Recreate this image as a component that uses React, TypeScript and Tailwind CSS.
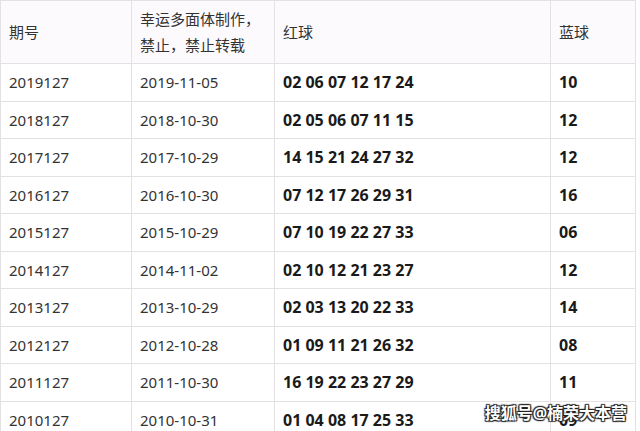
const rows: [string, string, string, string][] = [
  ['2019127', '2019-11-05', '02 06 07 12 17 24', '10'],
  ['2018127', '2018-10-30', '02 05 06 07 11 15', '12'],
  ['2017127', '2017-10-29', '14 15 21 24 27 32', '12'],
  ['2016127', '2016-10-30', '07 12 17 26 29 31', '16'],
  ['2015127', '2015-10-29', '07 10 19 22 27 33', '06'],
  ['2014127', '2014-11-02', '02 10 12 21 23 27', '12'],
  ['2013127', '2013-10-29', '02 03 13 20 22 33', '14'],
  ['2012127', '2012-10-28', '01 09 11 21 26 32', '08'],
  ['2011127', '2011-10-30', '16 19 22 23 27 29', '11'],
  ['2010127', '2010-10-31', '01 04 08 17 25 33', '09'],
];

export default function App() {
  return (
    <div
      className="relative w-[640px] h-[431px] overflow-hidden bg-white"
      style={{ fontFamily: '"Noto Sans", "Noto Sans CJK SC", sans-serif' }}
    >
      <table className="w-[635px] border-collapse table-fixed text-[15px] text-[#333]">
        <colgroup>
          <col className="w-[131px]" />
          <col className="w-[143px]" />
          <col className="w-[276px]" />
          <col className="w-[85px]" />
        </colgroup>
        <thead>
          <tr className="h-[63px] bg-[#fdfafd]">
            <th className="border border-[#e3e1e3] px-2 text-left font-normal">期号</th>
            <th className="border border-[#e3e1e3] px-2 text-left font-normal leading-[26px]">
              幸运多面体制作，
              <br />
              禁止，禁止转载
            </th>
            <th className="border border-[#e3e1e3] px-2 text-left font-normal">红球</th>
            <th className="border border-[#e3e1e3] px-2 text-left font-normal">蓝球</th>
          </tr>
        </thead>
        <tbody>
          {rows.map((r) => (
            <tr key={r[0]} className="h-[37.5px]">
              <td className="border border-[#e3e1e3] px-2">{r[0]}</td>
              <td className="border border-[#e3e1e3] px-2">{r[1]}</td>
              <td className="border border-[#e3e1e3] px-2 font-bold text-[#1a1a1a] text-[16px]">{r[2]}</td>
              <td className="border border-[#e3e1e3] px-2 font-bold text-[#1a1a1a] text-[16px]">{r[3]}</td>
            </tr>
          ))}
        </tbody>
      </table>
      <div
        className="absolute right-[13px] bottom-[6px] text-[16px] font-bold text-white"
        style={{ textShadow: '0 0 1px #222, 1px 1px 1px #222, -1px -1px 1px #222, 1px -1px 1px #222, -1px 1px 1px #222' }}
      >
        搜狐号@楠荣大本营
      </div>
    </div>
  );
}
